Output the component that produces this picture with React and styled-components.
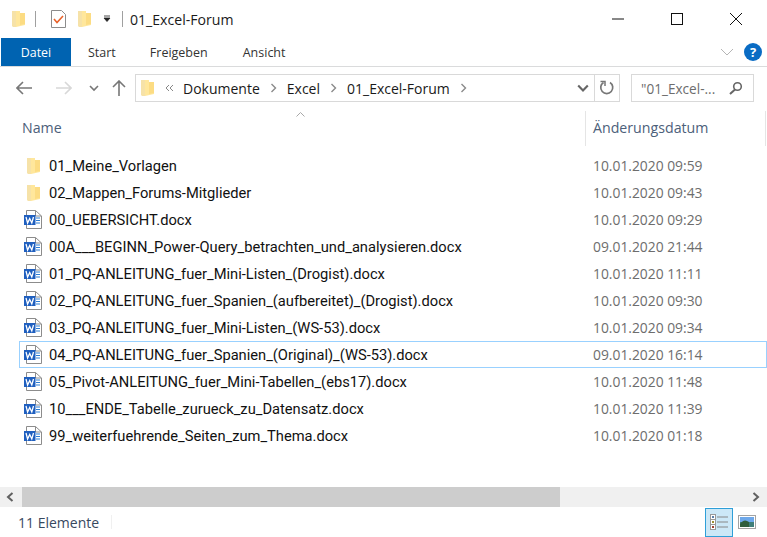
import React from "react";
import styled, { createGlobalStyle } from "styled-components";

const GlobalStyle = createGlobalStyle`
  html, body {
    margin: 0;
    padding: 0;
    background: #fff;
    overflow: hidden;
  }
  body {
    font-family: "Open Sans", "Noto Sans", sans-serif;
  }
`;

const Win = styled.div`
  width: 767px;
  height: 537px;
  display: flex;
  flex-direction: column;
  background: #fff;
  overflow: hidden;
`;

const TitleBar = styled.div`
  height: 38px;
  flex: none;
  display: flex;
  align-items: center;
  padding: 0 2px 0 12px;
`;

const QuickSep = styled.span`
  width: 1px;
  height: 16px;
  background: #a0a0a0;
  margin: ${(p) => p.$m};
`;

const Spacer = styled.span`
  width: ${(p) => p.$w}px;
  flex: none;
`;

const WinTitle = styled.span`
  font-size: 14.1px;
  color: #1a1a1a;
  margin-left: 7px;
  flex: 1;
`;

const WinBtn = styled.div`
  width: 59px;
  height: 38px;
  display: flex;
  align-items: center;
  justify-content: center;
`;

const Tabs = styled.div`
  height: 28px;
  flex: none;
  display: flex;
  align-items: stretch;
  border-bottom: 1px solid #dadbdc;
`;

const FileTab = styled.div`
  width: 70px;
  margin-left: 1px;
  background: #0063b1;
  color: #fff;
  font-size: 12.4px;
  display: flex;
  align-items: center;
  justify-content: center;
`;

const Tab = styled.div`
  font-size: 12.5px;
  color: #333;
  display: flex;
  align-items: center;
  margin-left: ${(p) => p.$ml}px;
`;

const TabEnd = styled.div`
  margin-left: auto;
  display: flex;
  align-items: center;
  gap: 10px;
  padding-right: 5px;
`;

const HelpIcon = styled.div`
  width: 18px;
  height: 18px;
  border-radius: 50%;
  background: #0a6cc4;
  color: #fff;
  font-size: 13px;
  font-weight: 700;
  display: flex;
  align-items: center;
  justify-content: center;
`;

const NavBar = styled.div`
  height: 28px;
  flex: none;
  display: flex;
  align-items: center;
  padding: 7px 0 7px 16px;
`;

const NavBtn = styled.div`
  display: flex;
  align-items: center;
  justify-content: center;
  width: ${(p) => p.$w}px;
  margin-right: ${(p) => p.$mr || 0}px;
`;

const AddressBox = styled.div`
  box-sizing: border-box;
  width: 485px;
  height: 28px;
  margin-left: 9px;
  border: 1px solid #d9d9d9;
  display: flex;
  align-items: center;
  padding-left: 5px;
  font-size: 14px;
  color: #1a1a1a;
`;

const Crumb = styled.span`
  margin: 0 10px 0 ${(p) => p.$ml || 10}px;
`;

const Guillemet = styled.svg`
  margin-left: 11px;
`;

const AddressEnd = styled.div`
  margin-left: auto;
  display: flex;
  align-items: center;
  height: 100%;
`;

const Refresh = styled.div`
  width: 24px;
  height: 100%;
  margin-left: 5px;
  border-left: 1px solid #d9d9d9;
  display: flex;
  align-items: center;
  justify-content: center;
`;

const SearchBox = styled.div`
  box-sizing: border-box;
  width: 123px;
  height: 28px;
  margin-left: 11px;
  border: 1px solid #d9d9d9;
  display: flex;
  align-items: center;
  justify-content: space-between;
  padding: 0 10px 0 9px;
  font-size: 13.6px;
  color: #6d6d6d;
`;

const HeadRow = styled.div`
  height: 35px;
  flex: none;
  margin-top: 2px;
  display: grid;
  grid-template-columns: 586px 180px 1fr;
  position: relative;
`;

const HeadCell = styled.div`
  font-size: 14.2px;
  color: #4c607a;
  padding-left: ${(p) => p.$pl}px;
  padding-bottom: 3px;
  display: flex;
  align-items: center;
  border-right: ${(p) => (p.$line ? "1px solid #e5e5e5" : "none")};
`;

const SortArrow = styled.svg`
  position: absolute;
  left: 296px;
  top: 1px;
`;

const List = styled.div`
  flex: 1;
  padding-top: 6px;
  padding-left: 19px;
`;

const Row = styled.div`
  height: 27px;
  box-sizing: border-box;
  display: grid;
  grid-template-columns: 566px 1fr;
  align-items: center;
  border: 1px solid ${(p) => (p.$selected ? "#99d1ff" : "transparent")};
`;

const NameCell = styled.div`
  display: flex;
  align-items: center;
  gap: 7px;
  padding-left: 4px;
  font-family: Roboto, "Open Sans", sans-serif;
  font-size: 14.7px;
  color: #111;
  white-space: nowrap;
`;

const IconSlot = styled.span`
  width: 18px;
  display: flex;
  justify-content: center;
`;

const DateCell = styled.div`
  font-size: 13.85px;
  color: #6d6d6d;
  padding-left: 7px;
`;

const ScrollBar = styled.div`
  height: 20px;
  flex: none;
  background: #f0f0f0;
  display: flex;
  align-items: center;
  justify-content: space-between;
  position: relative;
`;

const Thumb = styled.div`
  position: absolute;
  left: 22px;
  top: 0;
  width: 538px;
  height: 100%;
  background: #cdcdcd;
`;

const ScrollArrow = styled.svg`
  margin: 0 7px 0 6px;
`;

const StatusBar = styled.div`
  height: 30px;
  flex: none;
  display: flex;
  align-items: center;
  padding-left: 18px;
  font-size: 14px;
  color: #37495f;
`;

const StatusSep = styled.span`
  width: 1px;
  height: 14px;
  background: #f0f0f0;
  margin-left: 12px;
`;

const ViewBtns = styled.div`
  margin-left: auto;
  display: flex;
  align-items: center;
  padding-right: 6px;
`;

const ViewBtn = styled.div`
  box-sizing: border-box;
  width: 28px;
  height: 29px;
  display: flex;
  align-items: center;
  justify-content: center;
  background: ${(p) => (p.$active ? "#cce8f7" : "transparent")};
  border: 1px solid ${(p) => (p.$active ? "#2f9fd8" : "transparent")};
`;

const FolderIcon = () => (
  <svg width="13" height="18" viewBox="0 0 13 18">
    <path d="M0 1 H4 V17 H1 L0 16Z" fill="#f6e2a8" />
    <path d="M4 1 H8 V3 H13 V15 L4 17Z" fill="#ffe79c" />
    <path d="M8 3 H13 V14 L8 15Z" fill="#fcdc83" />
  </svg>
);

const WordIcon = () => (
  <svg width="18" height="19" viewBox="0 0 18 19">
    <path d="M2.5 .5 H11.5 L17.5 6 V18.5 H2.5Z" fill="#fff" stroke="#8c8c8c" />
    <path d="M11.5 .5 V6 H17.5" fill="none" stroke="#8c8c8c" />
    <rect x="0" y="5" width="11.5" height="10" fill="#1f5fbf" />
    <path d="M2 7 L3.6 13 L5.7 8.5 L7.8 13 L9.5 7" fill="none" stroke="#fff" strokeWidth="1.3" />
    <path d="M12 8 H16 M12 10.5 H16 M12 13 H16" stroke="#2b7cd3" />
  </svg>
);

const rows = [
  ["01_Meine_Vorlagen", "10.01.2020 09:59", "folder"],
  ["02_Mappen_Forums-Mitglieder", "10.01.2020 09:43", "folder"],
  ["00_UEBERSICHT.docx", "10.01.2020 09:29"],
  ["00A___BEGINN_Power-Query_betrachten_und_analysieren.docx", "09.01.2020 21:44"],
  ["01_PQ-ANLEITUNG_fuer_Mini-Listen_(Drogist).docx", "10.01.2020 11:11"],
  ["02_PQ-ANLEITUNG_fuer_Spanien_(aufbereitet)_(Drogist).docx", "10.01.2020 09:30"],
  ["03_PQ-ANLEITUNG_fuer_Mini-Listen_(WS-53).docx", "10.01.2020 09:34"],
  ["04_PQ-ANLEITUNG_fuer_Spanien_(Original)_(WS-53).docx", "09.01.2020 16:14", "selected"],
  ["05_Pivot-ANLEITUNG_fuer_Mini-Tabellen_(ebs17).docx", "10.01.2020 11:48"],
  ["10___ENDE_Tabelle_zurueck_zu_Datensatz.docx", "10.01.2020 11:39"],
  ["99_weiterfuehrende_Seiten_zum_Thema.docx", "10.01.2020 01:18"],
];

const Chevron = ({ color = "#777", size = 10, sw = 1.6 }) => (
  <svg width={size} height={size} viewBox="0 0 10 10">
    <path d="M1 3 L5 7 L9 3" fill="none" stroke={color} strokeWidth={sw} />
  </svg>
);

const Sep = () => (
  <svg width="7" height="10" viewBox="0 0 7 10">
    <path d="M1.5 1 L5.5 5 L1.5 9" fill="none" stroke="#8a8a8a" strokeWidth="1.4" />
  </svg>
);

export default function App() {
  return (
    <Win>
      <GlobalStyle />
      <TitleBar>
        <FolderIcon />
        <QuickSep $m="0 15px 0 10px" />
        <svg width="15" height="18" viewBox="0 0 15 18">
          <path d="M.5 .5 H10.5 L14.5 4.5 V17.5 H.5Z" fill="#fff" stroke="#8c8c8c" />
          <path d="M3 9 L6 12.5 L12 6" fill="none" stroke="#e8622a" strokeWidth="1.6" />
        </svg>
        <Spacer $w={12} />
        <FolderIcon />
        <Spacer $w={12} />
        <svg width="8" height="8" viewBox="0 0 8 8">
          <path d="M1 1 H7 M1 3 H7 L4 6.5Z" fill="#222" stroke="#222" strokeWidth=".8" />
        </svg>
        <QuickSep $m="0 0 0 11px" />
        <WinTitle>01_Excel-Forum</WinTitle>
        <WinBtn>
          <svg width="12" height="2"><path d="M0 1 H12" stroke="#111" /></svg>
        </WinBtn>
        <WinBtn>
          <svg width="12" height="12"><rect x=".5" y=".5" width="11" height="11" fill="none" stroke="#111" /></svg>
        </WinBtn>
        <WinBtn>
          <svg width="12" height="12"><path d="M0 0 L12 12 M12 0 L0 12" stroke="#111" /></svg>
        </WinBtn>
      </TitleBar>
      <Tabs>
        <FileTab>Datei</FileTab>
        <Tab $ml={17}>Start</Tab>
        <Tab $ml={34}>Freigeben</Tab>
        <Tab $ml={35}>Ansicht</Tab>
        <TabEnd>
          <svg width="14" height="8" viewBox="0 0 14 8">
            <path d="M1 1 L7 7 L13 1" fill="none" stroke="#b5b5b5" />
          </svg>
          <HelpIcon>?</HelpIcon>
        </TabEnd>
      </Tabs>
      <NavBar>
        <NavBtn $w={17} $mr={22}>
          <svg width="17" height="14" viewBox="0 0 17 14">
            <path d="M1 7 H16 M7 1 L1 7 L7 13" fill="none" stroke="#777" strokeWidth="1.6" />
          </svg>
        </NavBtn>
        <NavBtn $w={17} $mr={13}>
          <svg width="17" height="14" viewBox="0 0 17 14">
            <path d="M1 7 H16 M10 1 L16 7 L10 13" fill="none" stroke="#d8d8d8" strokeWidth="1.6" />
          </svg>
        </NavBtn>
        <NavBtn $w={18} $mr={9}><Chevron /></NavBtn>
        <NavBtn $w={14}>
          <svg width="14" height="17" viewBox="0 0 14 17">
            <path d="M7 16 V1 M1 7 L7 1 L13 7" fill="none" stroke="#777" strokeWidth="1.6" />
          </svg>
        </NavBtn>
        <AddressBox>
          <FolderIcon />
          <Guillemet width="10" height="8" viewBox="0 0 10 8">
            <path d="M4 1 L1 4 L4 7 M8 1 L5 4 L8 7" fill="none" stroke="#888" />
          </Guillemet>
          <Crumb $ml={8}>Dokumente</Crumb><Sep />
          <Crumb>Excel</Crumb><Sep />
          <Crumb>01_Excel-Forum</Crumb><Sep />
          <AddressEnd>
            <Chevron color="#666" size={12} sw={1.8} />
            <Refresh>
              <svg width="16" height="16" viewBox="0 0 16 16">
                <path d="M4.5 2.5 A6 6 0 1 0 11 2.5" fill="none" stroke="#777" strokeWidth="1.7" />
                <path d="M1.5 1.5 H6 V6" fill="none" stroke="#777" strokeWidth="1.5" />
              </svg>
            </Refresh>
          </AddressEnd>
        </AddressBox>
        <SearchBox>
          <span>"01_Excel-...</span>
          <svg width="14" height="14" viewBox="0 0 14 14">
            <circle cx="8.5" cy="5.5" r="3.8" fill="none" stroke="#666" strokeWidth="1.6" />
            <path d="M6 8.5 L1 13" stroke="#666" strokeWidth="2" />
          </svg>
        </SearchBox>
      </NavBar>
      <HeadRow>
        <SortArrow width="9" height="5" viewBox="0 0 9 5">
          <path d="M.5 4.5 L4.5 .5 L8.5 4.5" fill="none" stroke="#a8a8a8" />
        </SortArrow>
        <HeadCell $pl={22} $line>Name</HeadCell>
        <HeadCell $pl={7} $line>Änderungsdatum</HeadCell>
      </HeadRow>
      <List>
        {rows.map(([name, date, kind]) => (
          <Row key={name} $selected={kind === "selected"}>
            <NameCell>
              <IconSlot>{kind === "folder" ? <FolderIcon /> : <WordIcon />}</IconSlot>
              {name}
            </NameCell>
            <DateCell>{date}</DateCell>
          </Row>
        ))}
      </List>
      <ScrollBar>
        <Thumb />
        <ScrollArrow width="8" height="10" viewBox="0 0 8 10">
          <path d="M6.5 1 L2 5 L6.5 9" fill="none" stroke="#606060" strokeWidth="2" />
        </ScrollArrow>
        <ScrollArrow width="8" height="10" viewBox="0 0 8 10">
          <path d="M1.5 1 L6 5 L1.5 9" fill="none" stroke="#606060" strokeWidth="2" />
        </ScrollArrow>
      </ScrollBar>
      <StatusBar>
        11 Elemente
        <StatusSep />
        <ViewBtns>
          <ViewBtn $active>
            <svg width="18" height="16" viewBox="0 0 18 16">
              <rect x=".5" y=".5" width="5" height="15" fill="#fff" stroke="#999" />
              <path d="M.5 5.5 H5.5 M.5 10.5 H5.5" stroke="#999" />
              <rect x="2" y="2" width="2" height="2" fill="#5b7fa8" />
              <rect x="2" y="7" width="2" height="2" fill="#a09030" />
              <rect x="2" y="12" width="2" height="2" fill="#a04030" />
              <path d="M7 3 H18 M7 8 H18 M7 13 H18" stroke="#888" />
            </svg>
          </ViewBtn>
          <ViewBtn>
            <svg width="18" height="14" viewBox="0 0 18 14">
              <rect x=".5" y=".5" width="17" height="13" fill="#fff" stroke="#a3a3a3" />
              <rect x="2" y="2" width="14" height="5" fill="#6ea8ea" />
              <rect x="2" y="7" width="14" height="5" fill="#3f7e78" />
              <path d="M2 9 Q6 3 11 7 L11 12 H2Z" fill="#2f5d3c" />
            </svg>
          </ViewBtn>
        </ViewBtns>
      </StatusBar>
    </Win>
  );
}
